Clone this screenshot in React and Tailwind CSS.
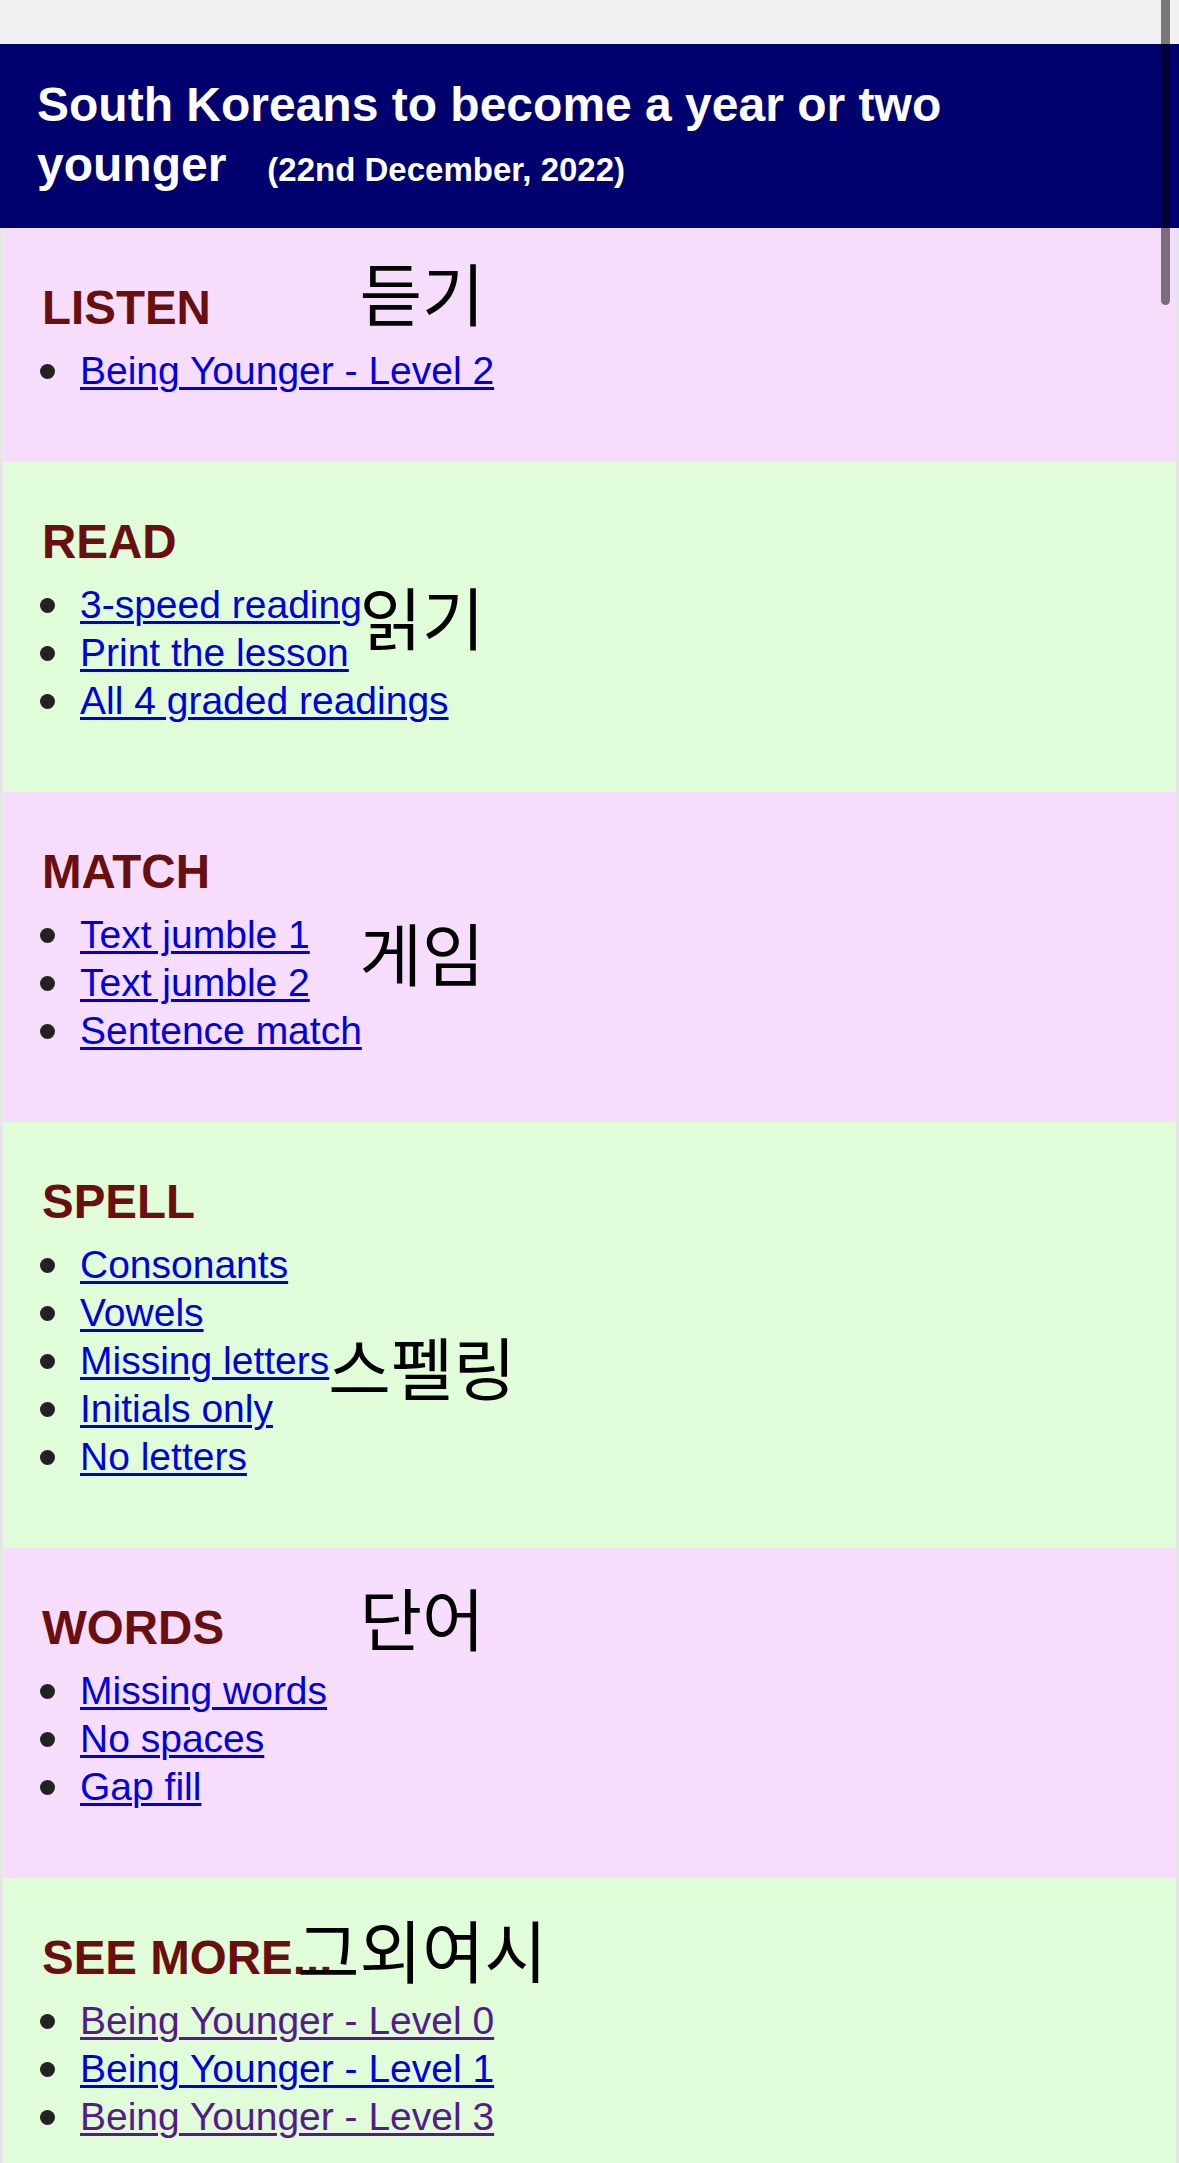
import React from 'react'

const sections = [
  { title: 'LISTEN', ko: '듣기', bg: 'bg-[#f5ddfb]', top: 'top-[30px]',
    links: [{ t: 'Being Younger - Level 2' }] },
  { title: 'READ', ko: '읽기', bg: 'bg-[#e0fcd8]', top: 'top-[120px]',
    links: [{ t: '3-speed reading' }, { t: 'Print the lesson' }, { t: 'All 4 graded readings' }] },
  { title: 'MATCH', ko: '게임', bg: 'bg-[#f5ddfb]', top: 'top-[126px]',
    links: [{ t: 'Text jumble 1' }, { t: 'Text jumble 2' }, { t: 'Sentence match' }] },
  { title: 'SPELL', ko: '스펠링', bg: 'bg-[#e0fcd8]', top: 'top-[210px]',
    links: [{ t: 'Consonants' }, { t: 'Vowels' }, { t: 'Missing letters' }, { t: 'Initials only' }, { t: 'No letters' }] },
  { title: 'WORDS', ko: '단어', bg: 'bg-[#f5ddfb]', top: 'top-[35px]',
    links: [{ t: 'Missing words' }, { t: 'No spaces' }, { t: 'Gap fill' }] },
  { title: 'SEE MORE...', ko: '그외여시', bg: 'bg-[#e0fcd8]', top: 'top-[37px]',
    links: [{ t: 'Being Younger - Level 0', v: true }, { t: 'Being Younger - Level 1' }, { t: 'Being Younger - Level 3', v: true }] },
]

function Section({ s }) {
  return (
    <section className={'relative mx-[3px] pl-[39px] pt-[53px] pb-[67px] ' + s.bg}>
      <h2 className="text-[47.5px] leading-[54px] font-bold text-[#6a0f0f]">{s.title}</h2>
      <ul className="mt-[12px]">
        {s.links.map(l => (
          <li key={l.t} className="flex items-center h-[48px]">
            <span className="-ml-[2px] mr-[25px] w-[15px] h-[15px] rounded-full bg-[#222] shrink-0" />
            <a href="#" className={'text-[39px] leading-[48px] underline decoration-[2.5px] underline-offset-[3px] ' + (l.v ? 'text-[#551a8b]' : 'text-[#0000dd]')}>
              {l.t}
            </a>
          </li>
        ))}
      </ul>
      <span className={"absolute left-[219px] w-[400px] text-center whitespace-nowrap text-[68px] leading-none text-black font-['Noto_Sans_CJK_KR',sans-serif] " + s.top}>
        {s.ko}
      </span>
    </section>
  )
}

export default function App() {
  return (
    <div className="relative min-h-screen bg-[#e6e6e6] font-['Liberation_Sans',Arial,'Noto_Sans_CJK_KR',sans-serif]">
      <div className="h-[44px] bg-[#f1f1f1]" />
      <header className="bg-[#00006f] pl-[37px] pr-[150px] pt-[31px] pb-[33px]">
        <h1 className="text-white font-bold text-[48px] leading-[60px]">
          South Koreans to become a year or two younger<span className="ml-[41px] text-[33px] leading-none">(22nd December, 2022)</span>
        </h1>
      </header>
      {sections.map(s => <Section key={s.title} s={s} />)}
      <div className="absolute right-[9px] top-[-10px] w-[9px] h-[315px] rounded-full bg-black/50" />
    </div>
  )
}
